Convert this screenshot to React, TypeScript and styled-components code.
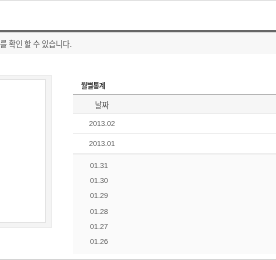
import React from "react";
import styled, { createGlobalStyle } from "styled-components";

const Global = createGlobalStyle`
  html, body { margin: 0; padding: 0; background: #fff; }
  body {
    font-family: "Liberation Sans", "Noto Sans CJK KR", sans-serif;
    overflow: hidden;
    -webkit-font-smoothing: antialiased;
  }
`;

const Page = styled.div`
  width: 276px;
  height: 260px;
  border-top: 1px solid #e2e2e2;
  box-sizing: border-box;
  overflow: hidden;
  display: flex;
  flex-direction: column;
  transform: translateZ(0);
`;

const Notice = styled.div`
  margin-top: 29px;
  border-top: 2px solid #666;
  box-shadow: inset 0 1px 0 #d8d8d8;
  background: #f7f7f7;
  height: 22px;
  display: flex;
  align-items: center;
  font-family: "Noto Sans CJK KR", sans-serif;
  font-size: 7.6px;
  color: #555;
  white-space: nowrap;
`;

const Content = styled.div`
  display: flex;
  align-items: flex-start;
  flex: 1;
`;

const ChartFrame = styled.div`
  margin-top: 21px;
  margin-left: -20px;
  width: 72px;
  height: 153px;
  box-sizing: border-box;
  background: #f4f4f4;
  border: 1px solid #ececec;
  padding: 3px 5px 4px 3px;
  display: flex;
`;

const ChartInner = styled.div`
  flex: 1;
  background: #fff;
  border: 1px solid #e3e3e3;
`;

const Stats = styled.div`
  margin-left: 21px;
  flex: 1;
  display: flex;
  flex-direction: column;
`;

const Title = styled.div`
  font-family: "Noto Sans CJK KR", sans-serif;
  font-weight: 700;
  font-size: 7px;
  color: #333;
  height: 18px;
  line-height: 18px;
  padding-left: 8px;
  margin-top: 22px;
  letter-spacing: -0.4px;
`;

const Table = styled.div`
  border-top: 1px solid #b5b5b5;
  box-shadow: inset 0 1px 0 #dedede;
  display: flex;
  flex-direction: column;
`;

const HeadRow = styled.div`
  height: 18px;
  background: #f6f6f6;
  border-bottom: 1px solid #ececec;
  display: flex;
  align-items: center;
  font-family: "Noto Sans CJK KR", sans-serif;
  font-size: 7.5px;
  color: #555;
`;

const Cell = styled.div<{ $w?: number }>`
  width: ${(p) => p.$w ?? 58}px;
  text-align: center;
`;

const Row = styled.div`
  height: 19px;
  border-bottom: 1px solid #eeeeee;
  display: flex;
  align-items: center;
  font-size: 7.2px;
  color: #5c5c5c;
`;

const DaySection = styled.div`
  background: #fafafa;
  border-top: 1px solid #f2f2f2;
  padding-top: 3px;
  height: 96px;
  display: flex;
  flex-direction: column;
`;

const DayRow = styled.div`
  height: 15.2px;
  line-height: 15.2px;
  padding-left: 17px;
  font-size: 7.2px;
  color: #5c5c5c;
`;

const Footer = styled.div`
  border-bottom: 1px solid #d4d4d4;
  height: 0;
`;

const months = ["2013.02", "2013.01"];
const days = ["01.31", "01.30", "01.29", "01.28", "01.27", "01.26"];

export default function App() {
  return (
    <>
      <Global />
      <Page>
        <Notice>를 확인 할 수 있습니다.</Notice>
        <Content>
          <ChartFrame>
            <ChartInner />
          </ChartFrame>
          <Stats>
            <Title>월별통계</Title>
            <Table>
              <HeadRow>
                <Cell>날짜</Cell>
              </HeadRow>
              {months.map((m) => (
                <Row key={m}>
                  <Cell>{m}</Cell>
                </Row>
              ))}
              <DaySection>
                {days.map((d) => (
                  <DayRow key={d}>{d}</DayRow>
                ))}
              </DaySection>
            </Table>
          </Stats>
        </Content>
        <Footer />
      </Page>
    </>
  );
}
